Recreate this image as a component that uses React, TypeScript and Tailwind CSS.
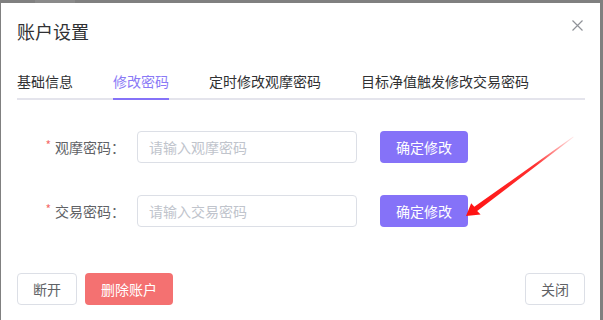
import React from "react";

const font = { fontFamily: '"Noto Sans CJK SC", "Noto Sans", sans-serif' };

function Row({ label, placeholder }: { label: string; placeholder: string }) {
  return (
    <div className="flex items-center h-[32px]">
      <div className="w-[108px] flex justify-end items-center text-[14px] text-[#606266]">
        <span className="text-[#f56c6c] text-[12px] mr-[4px] -mt-[4px]">*</span>
        <span>{label}：</span>
      </div>
      <input
        className="ml-[12px] w-[220px] h-[32px] border border-[#dcdfe6] rounded-[4px] px-[11px] text-[14px] text-[#606266] placeholder:text-[#c0c4cc] outline-none"
        placeholder={placeholder}
      />
      <button className="ml-[23px] w-[88px] h-[32px] rounded-[4px] bg-[#8572f8] text-white text-[14px]">
        确定修改
      </button>
    </div>
  );
}

export default function App() {
  const tabs = ["基础信息", "修改密码", "定时修改观摩密码", "目标净值触发修改交易密码"];
  return (
    <div className="relative w-[603px] h-[320px] bg-[#808080] overflow-hidden" style={font}>
      {/* page behind the dialog, mostly hidden */}
      <div className="relative h-[3px] overflow-hidden">
        <div className="absolute left-[35px] top-0 w-[40px] h-[3px] bg-[#8a8a8a]" />
      </div>

      <div className="ml-[1px] w-[599px] h-[317px] bg-white pl-[16px] pr-[15px] pt-[16px]">
        <div className="flex justify-between items-start">
          <div className="text-[18px] leading-[24px] text-[#303133]">账户设置</div>
          <svg width="11" height="11" viewBox="0 0 11 11" className="mt-[1px] mr-[2px]">
            <path d="M0.5 0.5L10.5 10.5M10.5 0.5L0.5 10.5" stroke="#909399" strokeWidth="1.2" />
          </svg>
        </div>

        <div className="mt-[28px] flex gap-[40px] border-b-2 border-[#e4e4ec]">
          {tabs.map((t, i) => (
            <div
              key={t}
              className={
                i === 1
                  ? "pb-[7px] -mb-[2px] border-b-2 border-[#8572f8] text-[14px] leading-[20px] text-[#8a7af6]"
                  : "pb-[7px] -mb-[2px] border-b-2 border-transparent text-[14px] leading-[20px] text-[#303133]"
              }
            >
              {t}
            </div>
          ))}
        </div>

        <div className="mt-[31px] flex flex-col gap-[32px]">
          <Row label="观摩密码" placeholder="请输入观摩密码" />
          <Row label="交易密码" placeholder="请输入交易密码" />
        </div>

        <div className="mt-[46px] flex items-center">
          <button className="w-[60px] h-[32px] border border-[#dcdfe6] rounded-[4px] text-[14px] text-[#606266]">
            断开
          </button>
          <button className="ml-[8px] w-[88px] h-[32px] rounded-[4px] bg-[#f47171] text-white text-[14px]">
            删除账户
          </button>
          <button className="ml-auto w-[60px] h-[32px] border border-[#dcdfe6] rounded-[4px] text-[14px] text-[#606266]">
            关闭
          </button>
        </div>
      </div>

      {/* red annotation arrow */}
      <svg className="absolute left-0 top-0 pointer-events-none" width="603" height="320">
        <defs>
          <linearGradient id="fade" x1="573" y1="137" x2="466" y2="216" gradientUnits="userSpaceOnUse">
            <stop offset="0" stopColor="#ff2020" stopOpacity="0.1" />
            <stop offset="0.35" stopColor="#ff1a1a" stopOpacity="0.9" />
            <stop offset="1" stopColor="#ff1010" />
          </linearGradient>
        </defs>
        <polygon
          points="466,216 471.2,203.2 474.3,206.8 573.2,136.6 573.6,137.3 477.2,211 480.6,214.6"
          fill="url(#fade)"
        />
      </svg>
    </div>
  );
}
